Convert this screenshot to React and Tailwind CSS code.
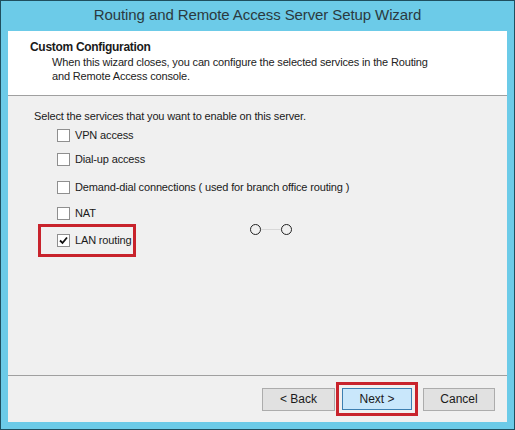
const services = [
  { label: 'VPN access', gap: 'mt-[5px]' },
  { label: 'Dial-up access', gap: 'mt-[10px]' },
  { label: 'Demand-dial connections ( used for branch office routing )', gap: 'mt-[14px]' },
  { label: 'NAT', gap: 'mt-[12px]' },
];

function Checkbox({ checked }) {
  return (
    <span className="w-[13px] h-[13px] border border-[#8f8f8f] bg-white flex items-center justify-center shrink-0">
      {checked && (
        <svg width="9" height="9" viewBox="0 0 9 9">
          <path d="M1 4.5 L3.5 7 L8 1.5" stroke="#111" strokeWidth="1.8" fill="none" />
        </svg>
      )}
    </span>
  );
}

export default function App() {
  return (
    <div className="w-[515px] h-[430px] bg-[#6ccbe8] border border-[#1f4f5f] pl-[7px] pr-[7px] pb-[7px] flex flex-col font-['Liberation_Sans',Arial,sans-serif] text-[#1a1a1a]">
      <div className="h-[30px] flex items-center justify-center text-[15px] tracking-[-0.1px] text-[#2b3a40] pb-[1px]">
        Routing and Remote Access Server Setup Wizard
      </div>

      <div className="flex-1 bg-[#f0f0f0] flex flex-col">
        <div className="h-[65px] bg-white border-b border-[#a0a0a0] pl-[22px] pt-[9px]">
          <h2 className="text-[12px] font-bold leading-[15px] tracking-[-0.3px]">Custom Configuration</h2>
          <p className="pl-[22px] text-[11px] leading-[14px] tracking-[-0.15px] text-[#222]">
            When this wizard closes, you can configure the selected services in the Routing<br />
            and Remote Access console.
          </p>
        </div>

        <div className="flex-1 pl-[26px] pt-[13px] text-[11px] tracking-[-0.15px]">
          <p className="leading-[14px] whitespace-nowrap">Select the services that you want to enable on this server.</p>
          <div className="pl-[23px]">
            {services.map((s) => (
              <div key={s.label} className={`flex items-center gap-[5px] h-[14px] whitespace-nowrap ${s.gap}`}>
                <Checkbox />
                <span>{s.label}</span>
              </div>
            ))}
          </div>
          <div className="flex items-center mt-[4px]">
            <div className="ml-[4px] w-[98px] h-[33px] border-[3px] border-[#c8232c] flex items-center gap-[5px] pl-[16px] whitespace-nowrap">
              <Checkbox checked />
              <span>LAN routing</span>
            </div>
            <div className="ml-[114px] -mt-[22px] flex items-center">
              <span className="w-[11px] h-[11px] rounded-full border border-[#222]" />
              <span className="w-[20px] h-px bg-[#d8d8d8]" />
              <span className="w-[11px] h-[11px] rounded-full border border-[#222]" />
            </div>
          </div>
        </div>

        <div className="h-[47px] border-t border-[#a0a0a0] flex items-center justify-end pr-[12px] text-[12px]">
          <button className="w-[73px] h-[23px] border border-[#acacac] bg-[#e1e1e1]">&lt; Back</button>
          <div className="ml-[1px] border-[3px] border-[#c8232c] px-[3px] py-[3px]">
            <button className="w-[70px] h-[22px] border border-[#3c7fb1] bg-[#c9e7fb]">Next &gt;</button>
          </div>
          <button className="ml-[5px] w-[72px] h-[23px] border border-[#acacac] bg-[#e1e1e1]">Cancel</button>
        </div>
      </div>
    </div>
  );
}
